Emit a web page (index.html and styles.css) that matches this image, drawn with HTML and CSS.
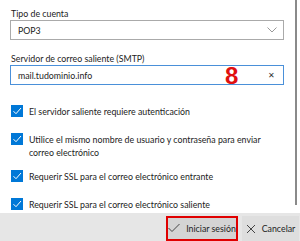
FILE: index.html
```html
<!DOCTYPE html>
<html lang="es">
<head>
  <meta charset="UTF-8">
  <title>Configuración de cuenta</title>
  <link rel="stylesheet" href="styles.css">
</head>
<body>
  <div class="page">
    <div class="scroll">
      <div class="content">
        <label class="field-label">Tipo de cuenta</label>
        <div class="select-box">
          <span>POP3</span>
          <svg class="chevron" width="10" height="6" viewBox="0 0 10 6">
            <polyline points="0.5,0.5 5,5 9.5,0.5" fill="none" stroke="#999" stroke-width="1"/>
          </svg>
        </div>

        <label class="field-label">Servidor de correo saliente (SMTP)</label>
        <div class="text-box">
          <span>mail.tudominio.info</span>
          <span class="marker">8</span>
          <span class="clear">&#x2715;</span>
        </div>

        <div class="checks">
          <div class="check-row">
            <span class="box"><svg width="12" height="12" viewBox="0 0 12 12"><polyline points="2.5,6.2 5,8.7 10,3" fill="none" stroke="#fff" stroke-width="1"/></svg></span>
            <span class="check-text">El servidor saliente requiere autenticación</span>
          </div>
          <div class="check-row">
            <span class="box"><svg width="12" height="12" viewBox="0 0 12 12"><polyline points="2.5,6.2 5,8.7 10,3" fill="none" stroke="#fff" stroke-width="1"/></svg></span>
            <span class="check-text">Utilice el mismo nombre de usuario y contraseña para enviar correo electrónico</span>
          </div>
          <div class="check-row">
            <span class="box"><svg width="12" height="12" viewBox="0 0 12 12"><polyline points="2.5,6.2 5,8.7 10,3" fill="none" stroke="#fff" stroke-width="1"/></svg></span>
            <span class="check-text">Requerir SSL para el correo electrónico entrante</span>
          </div>
          <div class="check-row">
            <span class="box"><svg width="12" height="12" viewBox="0 0 12 12"><polyline points="2.5,6.2 5,8.7 10,3" fill="none" stroke="#fff" stroke-width="1"/></svg></span>
            <span class="check-text">Requerir SSL para el correo electrónico saliente</span>
          </div>
        </div>
      </div>
      <div class="scrollbar"></div>
    </div>

    <div class="footer">
      <button class="btn btn-primary">
        <svg width="12" height="10" viewBox="0 0 12 10"><polyline points="0.5,5 4,8.5 11.5,1" fill="none" stroke="#444" stroke-width="1"/></svg>
        Iniciar sesión
      </button>
      <button class="btn btn-cancel">
        <svg width="10" height="10" viewBox="0 0 10 10"><path d="M1 1 L9 9 M9 1 L1 9" stroke="#444" stroke-width="1"/></svg>
        Cancelar
      </button>
    </div>
  </div>
</body>
</html>
```

FILE: styles.css
```css
body {
  margin: 0;
  background: #fff;
  color: #222;
  font-family: Lato, "Noto Sans", sans-serif;
  font-size: 8.8px;
}

.page {
  width: 300px;
  height: 241px;
  display: flex;
  flex-direction: column;
  overflow: hidden;
}

.scroll {
  flex: 1;
  display: flex;
  min-height: 0;
}

.content {
  flex: 1;
  padding: 7px 11px 0 10px;
}

.scrollbar {
  width: 2px;
  margin: 0 3px 8px 0;
  background: #8a8a8a;
}

.field-label {
  display: block;
  height: 13px;
  line-height: 13px;
  margin-left: 1px;
}

.select-box,
.text-box {
  height: 20px;
  box-sizing: border-box;
  display: flex;
  align-items: center;
  padding: 0 6px 0 7px;
}

.select-box {
  border: 1px solid #aaa;
  margin-bottom: 12px;
}

.select-box span,
.text-box span:first-child {
  flex: 1;
}

.text-box {
  border: 1px solid #4a90d9;
  position: relative;
}

.marker {
  position: absolute;
  left: 214px;
  top: -2px;
  color: #e01010;
  font-family: "Liberation Sans", Arial, sans-serif;
  font-weight: bold;
  font-size: 24px;
  line-height: 24px;
}

.clear {
  font-size: 8px;
  color: #333;
  margin-right: 2px;
}

.checks {
  margin-top: 20px;
}

/* rows are at least 28px apart, wrapped text only adds its extra line */
.check-row {
  display: flex;
  align-items: flex-start;
  gap: 6px;
  line-height: 13px;
  min-height: 28px;
  padding-bottom: 11px;
  box-sizing: border-box;
}

.box {
  flex: none;
  width: 12px;
  height: 12px;
  margin-left: 1px;
  background: #0078d7;
}

.box svg {
  display: block;
}

.footer {
  height: 28px;
  flex: none;
  background: #e6e6e6;
  display: flex;
  justify-content: flex-end;
  align-items: flex-end;
  gap: 4px;
  padding-right: 1px;
}

.btn {
  height: 25px;
  box-sizing: border-box;
  font-family: inherit;
  font-size: 8.8px;
  color: #222;
  display: flex;
  align-items: center;
  justify-content: center;
  gap: 6px;
  white-space: nowrap;
  border: none;
  padding: 0;
  background: #d4d4d4;
}

.btn-primary {
  width: 72px;
  border: 2px solid #e00000;
  padding-bottom: 1px;
}

.btn-cancel {
  width: 57px;
  background: #dedede;
}
```
